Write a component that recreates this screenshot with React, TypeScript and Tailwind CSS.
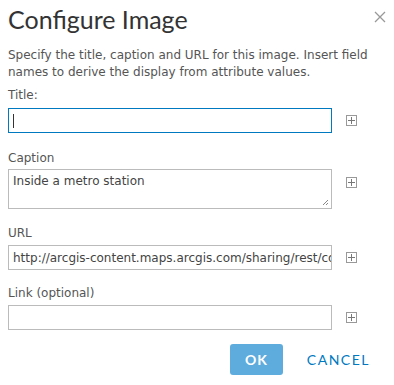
import React from 'react'

const PlusBox = () => (
  <div className="w-[11px] h-[11px] border border-[#999] flex items-center justify-center shrink-0">
    <svg width="9" height="9" viewBox="0 0 9 9">
      <path d="M4.5 1v7M1 4.5h7" stroke="#777" strokeWidth="1" />
    </svg>
  </div>
)

export default function App() {
  return (
    <div className="w-[394px] h-[385px] bg-white relative text-[#444]" style={{ fontFamily: '"DejaVu Sans", Verdana, sans-serif' }}>
      {/* Header */}
      <div className="flex items-start justify-between pl-2 pr-[8px] pt-[4px]">
        <h1 className="text-[25px] leading-[30px] text-[#333]" style={{ fontFamily: 'Lato, sans-serif' }}>Configure Image</h1>
        <svg width="12" height="12" viewBox="0 0 12 12" className="mt-[7px]">
          <path d="M1 1l10 10M11 1L1 11" stroke="#999" strokeWidth="1.3" />
        </svg>
      </div>

      <p className="px-2 mt-[13px] text-[12px] leading-[17px] text-[#555]">
        Specify the title, caption and URL for this image. Insert field names to derive the display from attribute values.
      </p>

      {/* Title */}
      <div className="px-2 mt-[6px]">
        <div className="text-[12px] leading-[16px] text-[#555]">Title:</div>
        <div className="flex items-center gap-[14px] mt-[5px]">
          <div className="w-[324px] h-[25px] border border-[#0079c1] flex items-center pl-[4px]">
            <div className="w-px h-[14px] bg-[#333]" />
          </div>
          <PlusBox />
        </div>
      </div>

      {/* Caption */}
      <div className="px-2 mt-[17px]">
        <div className="text-[12px] leading-[16px] text-[#555]">Caption</div>
        <div className="flex items-start gap-[14px] mt-[3px]">
          <div className="w-[324px] h-[40px] border border-[#bbb] relative px-[4px] pt-[3px] text-[12px] leading-[16px] text-[#444]">
            Inside a metro station
            <svg width="7" height="7" viewBox="0 0 7 7" className="absolute right-[2px] bottom-[2px]">
              <path d="M6 1L1 6M6 4L4 6" stroke="#888" strokeWidth="1" />
            </svg>
          </div>
          <div className="mt-[8px]"><PlusBox /></div>
        </div>
      </div>

      {/* URL */}
      <div className="px-2 mt-[16px]">
        <div className="text-[12px] leading-[16px] text-[#555]">URL</div>
        <div className="flex items-center gap-[14px] mt-[4px]">
          <input
            readOnly
            value="http://arcgis-content.maps.arcgis.com/sharing/rest/content"
            className="w-[324px] h-[25px] border border-[#bbb] pl-[4px] text-[12px] text-[#444] outline-none"
            style={{ fontFamily: '"DejaVu Sans", Verdana, sans-serif' }}
          />
          <PlusBox />
        </div>
      </div>

      {/* Link */}
      <div className="px-2 mt-[15px]">
        <div className="text-[12px] leading-[16px] text-[#555]">Link (optional)</div>
        <div className="flex items-center gap-[14px] mt-[4px]">
          <div className="w-[324px] h-[25px] border border-[#bbb]" />
          <PlusBox />
        </div>
      </div>

      {/* Buttons */}
      <div className="flex items-center justify-end pr-[24px] mt-[14px] gap-[24px]">
        <button className="w-[53px] h-[31px] rounded-[3px] bg-[#5eacdd] text-white text-[14px] font-bold tracking-[1px]" style={{ fontFamily: 'Lato, sans-serif' }}>OK</button>
        <button className="text-[#0079c1] text-[14px] tracking-[1.5px]" style={{ fontFamily: 'Lato, sans-serif' }}>CANCEL</button>
      </div>
    </div>
  )
}
